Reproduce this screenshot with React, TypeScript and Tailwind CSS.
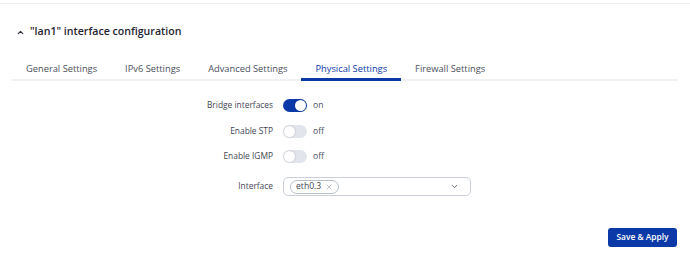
import React, { useState } from 'react';
import { ChevronUp, ChevronDown, X } from 'lucide-react';

const TABS = ['General Settings', 'IPv6 Settings', 'Advanced Settings', 'Physical Settings', 'Firewall Settings'];

const Toggle: React.FC<{ on: boolean; onChange: () => void }> = ({ on, onChange }) => (
  <button onClick={onChange} className="flex items-center gap-[6px]">
    <span
      className={`relative inline-flex h-[13px] w-[24px] items-center rounded-full ${on ? 'bg-[#0b3aa8]' : 'bg-[#e2e5ec]'}`}
    >
      <span
        className={`absolute h-[11px] w-[11px] rounded-full bg-white shadow-[0_0_2px_rgba(0,0,0,0.25)] ${on ? 'left-[12px]' : 'left-[1px]'}`}
      />
    </span>
    <span className="text-[8.6px] text-[#4b5160]">{on ? 'on' : 'off'}</span>
  </button>
);

const Row: React.FC<{ label: string; children: React.ReactNode; h?: string }> = ({ label, children, h = 'h-[25.5px]' }) => (
  <div className={`flex items-center ${h}`}>
    <div className="w-[273px] text-right text-[8.4px] text-[#3f4553]">{label}</div>
    <div className="ml-[10px]">{children}</div>
  </div>
);

export default function App() {
  const [active, setActive] = useState(3);
  const [toggles, setToggles] = useState({ bridge: true, stp: false, igmp: false });

  return (
    <div className="h-[259px] w-[690px] bg-white font-['Open_Sans',sans-serif]">
      <div className="h-[3px]" />
      <div className="border-t border-[#eceef2]" />

      {/* Section heading */}
      <div className="mt-[20px] flex h-[16px] items-center gap-[5px] pl-[16px]">
        <ChevronUp size={9} strokeWidth={3} className="text-[#2a2f3a]" />
        <span className="text-[10.6px] font-semibold text-[#1f2430]">"lan1" interface configuration</span>
      </div>

      {/* Tabs */}
      <div className="mx-[12px] mt-[18px] flex border-b-2 border-[#eef0f3]">
        {TABS.map((t, i) => (
          <button
            key={t}
            onClick={() => setActive(i)}
            className={`-mb-[2px] flex h-[23px] items-center border-b-[3px] px-[14px] pt-[2px] text-[9.3px] ${
              i === active ? 'border-[#0b3aa8] text-[#0b3aa8]' : 'border-transparent text-[#4b5160]'
            }`}
          >
            {t}
          </button>
        ))}
      </div>

      {/* Form */}
      <div className="mt-[12px] flex flex-col">
        <Row label="Bridge interfaces">
          <Toggle on={toggles.bridge} onChange={() => setToggles((p) => ({ ...p, bridge: !p.bridge }))} />
        </Row>
        <Row label="Enable STP">
          <Toggle on={toggles.stp} onChange={() => setToggles((p) => ({ ...p, stp: !p.stp }))} />
        </Row>
        <Row label="Enable IGMP">
          <Toggle on={toggles.igmp} onChange={() => setToggles((p) => ({ ...p, igmp: !p.igmp }))} />
        </Row>
        <Row label="Interface" h="h-[34px]">
          <div className="flex h-[19px] w-[188px] items-center justify-between rounded-[5px] border border-[#c9ced8] pl-[6px] pr-[11px]">
            <span className="flex h-[14px] items-center gap-[4px] rounded-full border border-[#b9bfca] px-[5px] text-[8.6px] text-[#3f4553]">
              eth0.3
              <X size={8} strokeWidth={1.5} className="text-[#7a8090]" />
            </span>
            <ChevronDown size={9} strokeWidth={2.5} className="text-[#5a6070]" />
          </div>
        </Row>
      </div>

      {/* Footer */}
      <div className="mt-[24px] flex justify-end pr-[13px]">
        <button className="flex h-[19px] w-[69px] items-center justify-center rounded-[3px] bg-[#0b3aa8] text-[8.4px] font-semibold text-white">
          Save &amp; Apply
        </button>
      </div>
    </div>
  );
}
